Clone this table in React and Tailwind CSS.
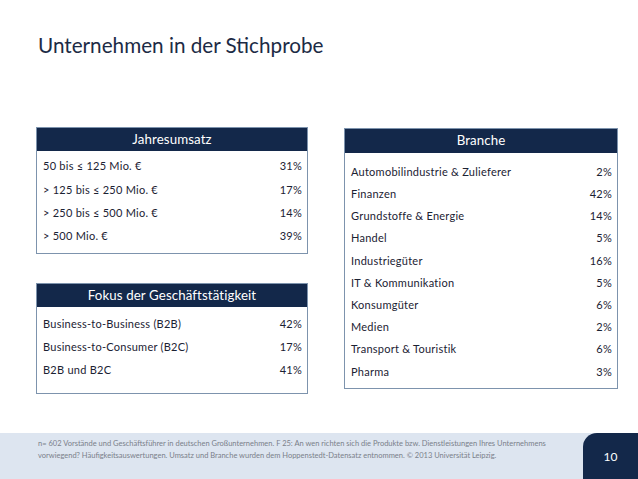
import React from "react";

const font = { fontFamily: "Lato, 'Open Sans', sans-serif" };

function Row({ label, value, h }) {
  return (
    <div className={`flex items-center justify-between ${h}`}>
      <span>{label}</span>
      <span>{value}</span>
    </div>
  );
}

function Box({ title, rows, className, headerH, rowH, body }) {
  return (
    <div className={`border border-[#7d93ad] bg-white ${className}`}>
      <div className={`bg-[#13284a] text-white text-[13.3px] tracking-[0.1px] flex items-center justify-center ${headerH}`}>
        {title}
      </div>
      <div className={body}>
        {rows.map((r) => (
          <Row key={r[0]} label={r[0]} value={r[1]} h={rowH} />
        ))}
      </div>
    </div>
  );
}

export default function App() {
  return (
    <div
      className="w-[638px] h-[479px] bg-white flex flex-col text-[#1b2233] overflow-hidden"
      style={font}
    >
      <div className="pl-[38px] pt-[33px] text-[20.7px] leading-[24px] text-[#1c2b45]">
        Unternehmen in der Stichprobe
      </div>
      <div className="flex pl-[36px] pt-[70px] gap-[36px] text-[11px] tracking-[0.25px]">
        <div className="flex flex-col w-[272px] gap-[29px]">
          <Box
            title="Jahresumsatz"
            headerH="h-[23px]"
            rowH="h-[23.3px]"
            body="pl-[6px] pr-[5px] pt-[4px] pb-[5px]"
            rows={[
              ["50 bis ≤ 125 Mio. €", "31%"],
              ["> 125 bis ≤ 250 Mio. €", "17%"],
              ["> 250 bis ≤ 500 Mio. €", "14%"],
              ["> 500 Mio. €", "39%"],
            ]}
          />
          <Box
            title="Fokus der Geschäftstätigkeit"
            headerH="h-[23px]"
            rowH="h-[23px]"
            body="pl-[6px] pr-[5px] pt-[6px] pb-[11px]"
            rows={[
              ["Business-to-Business (B2B)", "42%"],
              ["Business-to-Consumer (B2C)", "17%"],
              ["B2B und B2C", "41%"],
            ]}
          />
        </div>
        <div className="w-[274px] pt-[1px]">
          <Box
            title="Branche"
            headerH="h-[24px]"
            rowH="h-[22.2px]"
            body="pl-[6px] pr-[5px] pt-[8px] pb-[5px]"
            rows={[
              ["Automobilindustrie & Zulieferer", "2%"],
              ["Finanzen", "42%"],
              ["Grundstoffe & Energie", "14%"],
              ["Handel", "5%"],
              ["Industriegüter", "16%"],
              ["IT & Kommunikation", "5%"],
              ["Konsumgüter", "6%"],
              ["Medien", "2%"],
              ["Transport & Touristik", "6%"],
              ["Pharma", "3%"],
            ]}
          />
        </div>
      </div>
      <div className="mt-auto h-[46px] bg-[#dde5f0] flex">
        <div className="flex-1 pl-[38px] pt-[5px] text-[7.5px] leading-[11.5px] text-[#7a808a] whitespace-nowrap">
          <div>
            n= 602 Vorstände und Geschäftsführer in deutschen Großunternehmen. F 25: An wen richten sich die Produkte bzw. Dienstleistungen Ihres Unternehmens
          </div>
          <div>
            vorwiegend? Häufigkeitsauswertungen. Umsatz und Branche wurden dem Hoppenstedt-Datensatz entnommen. © 2013 Universität Leipzig.
          </div>
        </div>
        <div className="w-[55px] bg-[#13284a] rounded-tl-[14px] flex items-center justify-center text-white text-[12px] pt-[2px]">
          10
        </div>
      </div>
    </div>
  );
}
